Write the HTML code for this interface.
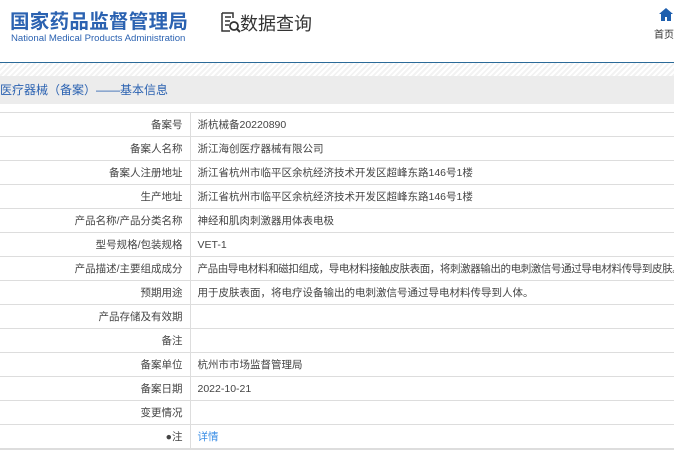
<!DOCTYPE html>
<html><head><meta charset="utf-8"><style>
body{margin:0;width:674px;height:460px;overflow:hidden;background:#fff;font-family:"Liberation Sans","Noto Sans CJK SC",sans-serif;position:relative}
.logo{position:absolute;left:10px;top:5px;font-size:19.5px;font-weight:bold;color:#2b62b1;letter-spacing:0.3px;white-space:nowrap}
.sub{position:absolute;left:11px;top:33px;font-size:9.6px;color:#2b62b1;white-space:nowrap}
.q{position:absolute;left:240px;top:10px;font-size:18px;color:#333;white-space:nowrap}
.home{position:absolute;left:654px;top:26px;font-size:10px;color:#333;white-space:nowrap}
.line{position:absolute;left:0;top:62px;width:674px;height:1px;background:#2b6a98}
.hatch{position:absolute;left:0;top:63px;width:674px;height:13px;background:repeating-linear-gradient(135deg,#f2f2f2 0 2px,#fff 2px 4px)}
.band{position:absolute;left:0;top:76px;width:674px;height:28px;background:#ececec;font-size:12px;color:#2b62b1;line-height:28px}
table{position:absolute;left:0;top:112px;width:674px;border-collapse:collapse;table-layout:fixed;font-size:10.5px;color:#444}
td{height:23px;border-top:1px solid #ddd;border-bottom:1px solid #ddd;padding:0;white-space:nowrap;overflow:hidden}
td.l{width:190px;text-align:right;padding-right:7px;border-right:1px solid #ddd;box-sizing:border-box}
td.v{padding-left:7px}
tr:last-child td{border-bottom:2px solid #ddd}
</style></head><body>
<div class="logo">国家药品监督管理局</div>
<div class="sub">National Medical Products Administration</div>
<svg style="position:absolute;left:220px;top:12px" width="22" height="22" viewBox="0 0 22 22"><path d="M2 1h11v5M2 1v18h8M5 5h6M5 9h5M5 13h4" fill="none" stroke="#333" stroke-width="1.5"/><circle cx="14" cy="14" r="4" fill="none" stroke="#333" stroke-width="1.8"/><path d="M17 17l3 3" stroke="#333" stroke-width="2"/></svg>
<div class="q">数据查询</div>
<svg style="position:absolute;left:659px;top:8px" width="14" height="13" viewBox="0 0 14 13"><path d="M7 0L0 6h2v7h4V9h2v4h4V6h2z" fill="#1e5fae"/></svg>
<div class="home">首页</div>
<div class="line"></div><div class="hatch"></div>
<div class="band">医疗器械（备案）——基本信息</div>
<table>
<colgroup><col style="width:190px"><col></colgroup>
<tr><td class="l">备案号</td><td class="v">浙杭械备20220890</td></tr>
<tr><td class="l">备案人名称</td><td class="v">浙江海创医疗器械有限公司</td></tr>
<tr><td class="l">备案人注册地址</td><td class="v">浙江省杭州市临平区余杭经济技术开发区超峰东路146号1楼</td></tr>
<tr><td class="l">生产地址</td><td class="v">浙江省杭州市临平区余杭经济技术开发区超峰东路146号1楼</td></tr>
<tr><td class="l">产品名称/产品分类名称</td><td class="v">神经和肌肉刺激器用体表电极</td></tr>
<tr><td class="l">型号规格/包装规格</td><td class="v">VET-1</td></tr>
<tr><td class="l">产品描述/主要组成成分</td><td class="v" style="letter-spacing:-0.4px">产品由导电材料和磁扣组成，导电材料接触皮肤表面，将刺激器输出的电刺激信号通过导电材料传导到皮肤。</td></tr>
<tr><td class="l">预期用途</td><td class="v">用于皮肤表面，将电疗设备输出的电刺激信号通过导电材料传导到人体。</td></tr>
<tr><td class="l">产品存储及有效期</td><td class="v"></td></tr>
<tr><td class="l">备注</td><td class="v"></td></tr>
<tr><td class="l">备案单位</td><td class="v">杭州市市场监督管理局</td></tr>
<tr><td class="l">备案日期</td><td class="v">2022-10-21</td></tr>
<tr><td class="l">变更情况</td><td class="v"></td></tr>
<tr><td class="l">●注</td><td class="v" style="color:#3a8ee6">详情</td></tr>
</table>
</body></html>
